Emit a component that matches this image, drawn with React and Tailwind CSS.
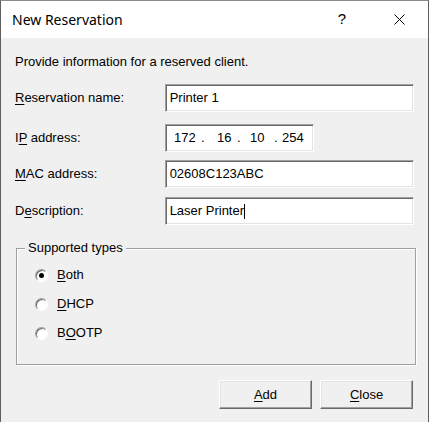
import { useState } from 'react';

const sunken =
  'border-t-[#a0a0a0] border-l-[#a0a0a0] border-r-white border-b-white border shadow-[inset_1px_1px_0_#696969,inset_-1px_-1px_0_#e3e3e3] bg-white';

function Key({ children }) {
  return <span className="underline underline-offset-[2px]">{children}</span>;
}

function Field({ label, children, className }) {
  return (
    <div className={`flex items-center ${className}`}>
      <div className="w-[150px]">{label}</div>
      {children}
    </div>
  );
}

function TextBox({ value, caret }) {
  return (
    <div className={`${sunken} w-[250px] h-[28px] flex items-center pl-[4px]`}>
      <span>{value}</span>
      {caret && <span className="w-px h-[15px] bg-black" />}
    </div>
  );
}

function Radio({ checked, label, onClick }) {
  return (
    <button className="flex items-center h-[20px]" onClick={onClick}>
      <span className="w-[13px] h-[13px] rounded-full border border-t-[#a0a0a0] border-l-[#a0a0a0] border-r-white border-b-white bg-white flex items-center justify-center shadow-[inset_1px_1px_0_#696969]">
        {checked && <span className="w-[5px] h-[5px] rounded-full bg-black" />}
      </span>
      <span className="ml-[9px]">{label}</span>
    </button>
  );
}

function Btn({ children }) {
  return (
    <button className="w-[93px] h-[29px] bg-[#f0f0f0] border border-t-white border-l-white border-r-[#696969] border-b-[#696969] shadow-[inset_-1px_-1px_0_#a0a0a0,inset_1px_1px_0_#e3e3e3]">
      {children}
    </button>
  );
}

export default function App() {
  const [type, setType] = useState('both');
  return (
    <div
      className="w-[429px] h-[422px] border-t border-l border-r border-t-[#8a8a8a] border-l-[#5f5f5f] border-r-[#5f5f5f] bg-[#f0f0f0] text-[13px] text-black flex flex-col"
      style={{ fontFamily: '"Liberation Sans", Arial, sans-serif' }}
    >
      <div className="h-[37px] bg-white flex items-center">
        <div
          className="pl-[11px] text-[14px] flex-1"
          style={{ fontFamily: '"Segoe UI", "Noto Sans", sans-serif' }}
        >
          New Reservation
        </div>
        <div className="w-[46px] text-center text-[15px] mr-[11px]">?</div>
        <div className="w-[46px] h-full flex items-center justify-center mr-[6px]">
          <svg width="11" height="11" viewBox="0 0 11 11" stroke="#000" strokeWidth="1">
            <path d="M0.5 0.5L10.5 10.5M10.5 0.5L0.5 10.5" />
          </svg>
        </div>
      </div>

      <div className="px-[14px] pt-[16px]">
        <p className="leading-[16px]">Provide information for a reserved client.</p>

        <Field className="mt-[14px]" label={<><Key>R</Key>eservation name:</>}>
          <TextBox value="Printer 1" />
        </Field>

        <Field className="mt-[12px]" label={<>I<Key>P</Key> address:</>}>
          <div className={`${sunken} w-[149px] h-[28px] flex items-center pl-[8px]`}>
            <span className="w-[27px]">172</span>
            <span className="w-[16px]">.</span>
            <span className="w-[20px]">16</span>
            <span className="w-[13px]">.</span>
            <span className="w-[24px]">10</span>
            <span className="w-[8px]">.</span>
            <span>254</span>
          </div>
        </Field>

        <Field className="mt-[8px]" label={<><Key>M</Key>AC address:</>}>
          <TextBox value="02608C123ABC" />
        </Field>

        <Field className="mt-[9px]" label={<>D<Key>e</Key>scription:</>}>
          <TextBox value="Laser Printer" caret />
        </Field>

        <div className="relative mt-[23px] ml-px w-[400px] h-[117px] border border-[#a0a0a0] shadow-[1px_1px_0_white,inset_1px_1px_0_white] pt-[16px] pl-[18px] flex flex-col gap-[9px]">
          <span className="absolute -top-[9px] left-[8px] px-[3px] bg-[#f0f0f0] leading-[16px]">
            Supported types
          </span>
          <Radio checked={type === 'both'} onClick={() => setType('both')} label={<><Key>B</Key>oth</>} />
          <Radio checked={type === 'dhcp'} onClick={() => setType('dhcp')} label={<><Key>D</Key>HCP</>} />
          <Radio checked={type === 'bootp'} onClick={() => setType('bootp')} label={<>B<Key>O</Key>OTP</>} />
        </div>

        <div className="flex justify-end gap-[8px] mt-[15px] pr-[1px]">
          <Btn><Key>A</Key>dd</Btn>
          <Btn><Key>C</Key>lose</Btn>
        </div>
      </div>
    </div>
  );
}
